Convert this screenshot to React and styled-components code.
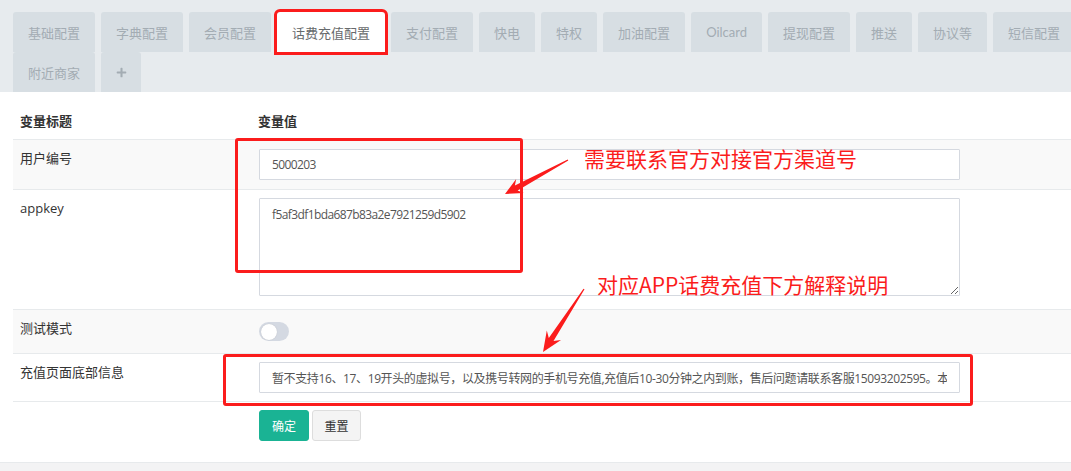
import React from 'react';
import styled, { createGlobalStyle } from 'styled-components';
import { FaPlus } from 'react-icons/fa';

const GlobalStyle = createGlobalStyle`
    html, body {
        margin: 0;
        padding: 0;
        overflow: hidden;
        background: #f3f3f4;
        font-family: "Open Sans", "Noto Sans CJK SC", sans-serif;
    }
`

const tabs = ['基础配置', '字典配置', '会员配置', '话费充值配置', '支付配置', '快电', '特权', '加油配置', 'Oilcard', '提现配置', '推送', '协议等', '短信配置', '附近商家'];

const rows = [
    { label: '用户编号', kind: 'input', value: '5000203', striped: true, pad: 9, tight: 0.6 },
    { label: 'appkey', kind: 'textarea', value: 'f5af3df1bda687b83a2e7921259d5902', pad: 8, tight: 0.6 },
    { label: '测试模式', kind: 'switch', striped: true, pad: 8 },
    { label: '充值页面底部信息', kind: 'input', value: '暂不支持16、17、19开头的虚拟号，以及携号转网的手机号充值,充值后10-30分钟之内到账，售后问题请联系客服15093202595。本平台充值', pad: 8, tight: 0.38 },
];

// tapered arrow, thin at the tail and wide at the head
function arrowPoints(tail, tip, head, half) {
    const dx = tip[0] - tail[0];
    const dy = tip[1] - tail[1];
    const len = Math.hypot(dx, dy);
    const ux = dx / len, uy = dy / len;
    const nx = -uy, ny = ux;
    const base = [tip[0] - ux * head, tip[1] - uy * head];
    const neck = [tip[0] - ux * head * 0.75, tip[1] - uy * head * 0.75];
    const pts = [
        [tail[0] + nx * 0.6, tail[1] + ny * 0.6],
        [neck[0] + nx * 2.8, neck[1] + ny * 2.8],
        [base[0] + nx * half, base[1] + ny * half],
        tip,
        [base[0] - nx * half, base[1] - ny * half],
        [neck[0] - nx * 2.8, neck[1] - ny * 2.8],
        [tail[0] - nx * 0.6, tail[1] - ny * 0.6],
    ];
    return pts.map(p => p[0].toFixed(1) + ',' + p[1].toFixed(1)).join(' ');
}

export default function App() {
    return (<>
        <GlobalStyle />
        <Page>
            <TabBar>
                {tabs.map(t => (
                    <Tab key={t} active={t === '话费充值配置'}>{t}</Tab>
                ))}
                <Tab narrow><FaPlus size={11} /></Tab>
            </TabBar>

            <Panel>
                <Table>
                    <thead>
                        <tr>
                            <Th>变量标题</Th>
                            <Th>变量值</Th>
                        </tr>
                    </thead>
                    <tbody>
                        {rows.map(r => (
                            <Row key={r.label} striped={r.striped}>
                                <LabelCell>{r.label}</LabelCell>
                                <ValueCell pad={r.pad}>
                                    {r.kind === 'input' && <TextInput type="text" tight={r.tight} defaultValue={r.value} />}
                                    {r.kind === 'textarea' && <TextArea tight={r.tight} defaultValue={r.value} />}
                                    {r.kind === 'switch' && <Switch><Knob /></Switch>}
                                </ValueCell>
                            </Row>
                        ))}
                        <Row>
                            <LabelCell />
                            <ValueCell pad={8}>
                                <Buttons>
                                    <Button primary>确定</Button>
                                    <Button>重置</Button>
                                </Buttons>
                            </ValueCell>
                        </Row>
                    </tbody>
                </Table>
            </Panel>

            <MarkBox style={{ left: 235, top: 138, width: 288, height: 135 }} />
            <MarkBox style={{ left: 223, top: 354, width: 750, height: 52 }} />
            <Note style={{ left: 584, top: 146 }}>需要联系官方对接官方渠道号</Note>
            <Note style={{ left: 597, top: 272 }}>对应APP话费充值下方解释说明</Note>
            <Overlay width="1071" height="471">
                <polygon points={arrowPoints([568, 160], [505, 194], 17, 8)} fill="#fb1c1c" />
                <polygon points={arrowPoints([584, 289], [543, 352], 20, 8.5)} fill="#fb1c1c" />
            </Overlay>
        </Page>
    </>
    )
}

const Page = styled.div`
    position: relative;
    width: 1100px;
    height: 471px;
`

const TabBar = styled.div`
    display: flex;
    flex-wrap: wrap;
    background: #e7ebee;
    padding: 12px 0 0 13px;
    height: 80px;
`

const Tab = styled.div`
    display: flex;
    align-items: center;
    justify-content: center;
    height: 40px;
    box-sizing: border-box;
    padding: ${props => props.narrow ? '0' : '0 15px'};
    width: ${props => props.narrow ? '40px' : 'auto'};
    margin-right: 6px;
    border-radius: 3px 3px 0 0;
    background: ${props => props.active ? '#ffffff' : '#d7dee3'};
    color: ${props => props.active ? '#676a6c' : '#a3acb3'};
    font-family: Lato, "Noto Sans CJK SC", sans-serif;
    font-size: 13px;
    outline: ${props => props.active ? '3px solid #fb1c1c' : 'none'};
    outline-offset: 0;
    position: relative;
    z-index: ${props => props.active ? 1 : 0};
`

const Panel = styled.div`
    background: #ffffff;
    padding: 11px 0 13px 13px;
    border-bottom: 1px solid #e7eaec;
`

const Table = styled.table`
    width: 100%;
    border-collapse: collapse;
    font-size: 13px;
    color: #333;
`

const Th = styled.th`
    text-align: left;
    font-weight: 700;
    padding: 8px 8px 8px 7px;
    line-height: 20px;
    width: ${props => props.children === '变量标题' ? '223px' : 'auto'};
`

const Row = styled.tr`
    background: ${props => props.striped ? '#f9f9f9' : '#ffffff'};
    border-top: 1px solid #e7eaec;
`

const LabelCell = styled.td`
    vertical-align: top;
    padding: 8px 8px 8px 7px;
    line-height: 20px;
    width: 223px;
`

const ValueCell = styled.td`
    vertical-align: top;
    padding: ${props => props.pad}px 8px;
`

const TextInput = styled.input`
    display: block;
    box-sizing: border-box;
    width: 701px;
    height: 31px;
    padding: 0 12px;
    border: 1px solid #d5d9e0;
    border-radius: 1px;
    background: #fff;
    color: #555;
    font-family: "Open Sans", "Noto Sans CJK SC", sans-serif;
    font-size: 12px;
    letter-spacing: -${props => props.tight || 0}px;
    outline: none;
`

const TextArea = styled.textarea`
    display: block;
    box-sizing: border-box;
    width: 701px;
    height: 98px;
    margin-bottom: 5px;
    padding: 7px 12px;
    border: 1px solid #d5d9e0;
    border-radius: 1px;
    color: #555;
    font-family: "Open Sans", "Noto Sans CJK SC", sans-serif;
    font-size: 12px;
    letter-spacing: -${props => props.tight || 0}px;
    line-height: 18px;
    outline: none;
`

const Switch = styled.div`
    width: 30px;
    height: 19px;
    margin: 4px 0;
    border-radius: 10px;
    background: #d4d9e2;
    display: flex;
    align-items: center;
    padding-left: 2px;
    box-sizing: border-box;
`

const Knob = styled.div`
    width: 16px;
    height: 16px;
    border-radius: 50%;
    background: #ffffff;
    box-shadow: 0 0 1px rgba(0, 0, 0, 0.2);
`

const Buttons = styled.div`
    display: flex;
    gap: 3px;
`

const Button = styled.button`
    height: 31px;
    width: ${props => props.primary ? '50px' : '49px'};
    border-radius: 3px;
    border: 1px solid ${props => props.primary ? '#1ab394' : '#dddddd'};
    background: ${props => props.primary ? '#1ab394' : '#f4f4f4'};
    color: ${props => props.primary ? '#ffffff' : '#333333'};
    font-family: "Open Sans", "Noto Sans CJK SC", sans-serif;
    font-size: 12px;
    padding: 0;
`

const MarkBox = styled.div`
    position: absolute;
    box-sizing: border-box;
    border: 3px solid #fb1c1c;
    border-radius: 3px;
    pointer-events: none;
`

const Note = styled.div`
    position: absolute;
    color: #fb1c1c;
    font-family: "Noto Sans CJK SC", sans-serif;
    font-size: 21px;
    line-height: 24px;
    white-space: nowrap;
    pointer-events: none;
`

const Overlay = styled.svg`
    position: absolute;
    left: 0;
    top: 0;
    pointer-events: none;
`
